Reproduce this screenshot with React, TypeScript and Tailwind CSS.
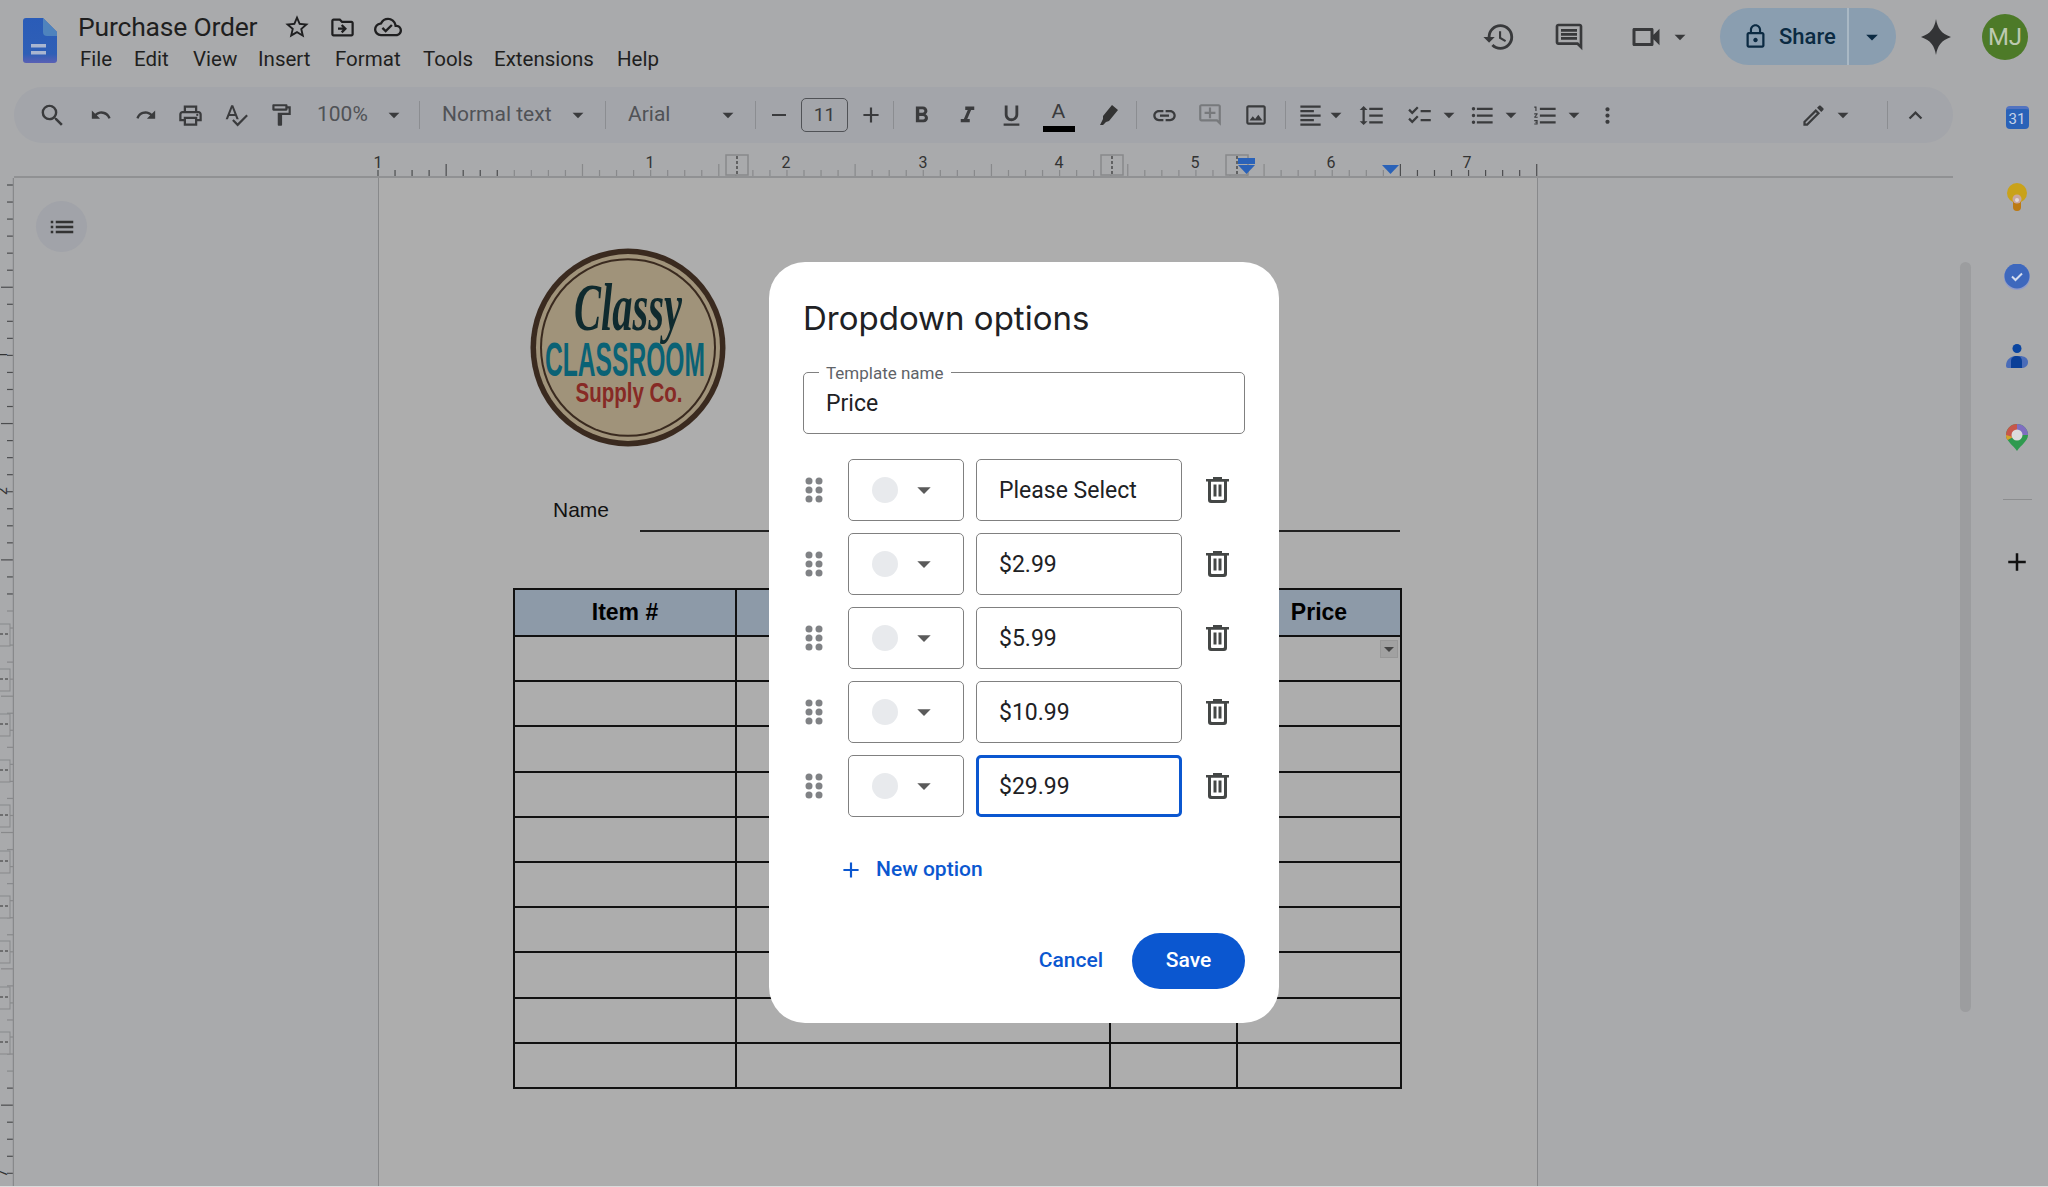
import type { ReactNode } from 'react'
import {
  MdSearch, MdUndo, MdRedo, MdOutlinePrint, MdSpellcheck, MdOutlineFormatPaint, MdFormatBold, MdFormatItalic,
  MdFormatUnderlined, MdOutlineLink, MdOutlineAddComment, MdOutlineImage, MdFormatAlignLeft, MdFormatLineSpacing,
  MdChecklist, MdFormatListBulleted, MdFormatListNumbered, MdMoreVert, MdOutlineEdit, MdKeyboardArrowUp, MdHistory,
  MdOutlineComment, MdOutlineVideocam, MdLockOutline, MdStarBorder, MdOutlineDriveFileMove, MdOutlineCloudDone,
  MdAdd, MdArrowDropDown, MdRemove, MdList,
} from 'react-icons/md'

const MENU = [
  ['File', 'w-[54px]'], ['Edit', 'w-[59px]'], ['View', 'w-[65px]'], ['Insert', 'w-[77px]'],
  ['Format', 'w-[88px]'], ['Tools', 'w-[71px]'], ['Extensions', 'w-[123px]'], ['Help', 'w-[50px]'],
] as const
const OPTIONS = ['Please Select', '$2.99', '$5.99', '$10.99', '$29.99']
const TABLE_ROWS = Array.from({ length: 10 }, (_, i) => i)
const RULER_TICKS = Array.from({ length: 69 }, (_, i) => 378 + i * 17.04)
const SIDE_TICKS = Array.from({ length: 60 }, (_, i) => i)

function Divider() {
  return <div className="w-px h-[28px] bg-[#8b8d91] shrink-0" />
}

function Btn({ children, className = 'w-[45px]' }: { children: ReactNode; className?: string }) {
  return <div className={`flex items-center justify-center shrink-0 h-full text-[#3a3b3d] ${className}`}>{children}</div>
}

function Caret({ className = '' }: { className?: string }) {
  return <MdArrowDropDown size={26} className={`shrink-0 ${className}`} />
}

function Drop({ label, className }: { label: string; className: string }) {
  return (
    <div className={`flex items-center justify-between shrink-0 h-full text-[21px] text-[#505256] ${className}`}>
      <span>{label}</span>
      <Caret className="text-[#3a3b3d]" />
    </div>
  )
}

function Toolbar() {
  return (
    <div className="ml-[14px] mr-0 h-[56px] rounded-[28px] bg-[#a3a5aa] flex items-center pl-[16px] pr-[15px] font-['Roboto',sans-serif]">
      <Btn><MdSearch size={29} /></Btn>
      <Btn className="w-[45px] ml-[3px]"><MdUndo size={22} /></Btn>
      <Btn><MdRedo size={22} /></Btn>
      <Btn><MdOutlinePrint size={27} /></Btn>
      <Btn><MdSpellcheck size={26} /></Btn>
      <Btn><MdOutlineFormatPaint size={26} /></Btn>
      <Drop label="100%" className="w-[116px] pl-[14px] pr-[12px]" />
      <Divider />
      <Drop label="Normal text" className="w-[185px] pl-[22px] pr-[14px]" />
      <Divider />
      <Drop label="Arial" className="w-[149px] pl-[22px] pr-[14px]" />
      <Divider />
      <Btn><MdRemove size={24} /></Btn>
      <div className="w-[47px] h-[34px] shrink-0 rounded-[5px] border border-[#505256] flex items-center justify-center text-[19px] text-[#3a3b3d]">11</div>
      <Btn><MdAdd size={26} /></Btn>
      <Divider />
      <Btn className="w-[45px] ml-[5px]"><MdFormatBold size={27} /></Btn>
      <Btn className="w-[44px] ml-px"><MdFormatItalic size={27} /></Btn>
      <Btn><MdFormatUnderlined size={27} /></Btn>
      <Btn className="w-[45px] ml-[2px]">
        <div className="relative w-[32px] h-[34px] flex justify-center font-['Liberation_Sans',sans-serif] text-[20px] leading-[26px]">
          A
          <div className="absolute left-0 right-0 bottom-0 h-[6px] bg-black" />
        </div>
      </Btn>
      <Btn className="w-[45px] ml-[5px]">
        <svg width="24" height="24" viewBox="0 0 24 24" fill="#333">
          <path d="M15 2l6 5-9 11-3 1-3 3H3l3-6 0-3z" />
        </svg>
      </Btn>
      <div className="ml-[5px]"><Divider /></div>
      <Btn className="w-[45px] ml-[5px]"><MdOutlineLink size={27} /></Btn>
      <Btn><MdOutlineAddComment size={26} className="text-[#77797c]" /></Btn>
      <Btn className="w-[45px] ml-px"><MdOutlineImage size={26} /></Btn>
      <div className="ml-[7px]"><Divider /></div>
      <Btn className="w-[30px] ml-[9px]"><MdFormatAlignLeft size={27} /></Btn>
      <Btn className="w-[22px]"><Caret /></Btn>
      <Btn className="w-[45px] ml-[2px]"><MdFormatLineSpacing size={27} /></Btn>
      <Btn className="w-[30px] ml-[10px]"><MdChecklist size={27} /></Btn>
      <Btn className="w-[30px]"><Caret /></Btn>
      <Btn className="w-[30px] ml-[3px]"><MdFormatListBulleted size={27} /></Btn>
      <Btn className="w-[28px]"><Caret /></Btn>
      <Btn className="w-[30px] ml-[5px]"><MdFormatListNumbered size={27} /></Btn>
      <Btn className="w-[28px]"><Caret /></Btn>
      <Btn className="w-[38px]"><MdMoreVert size={25} /></Btn>
      <Btn className="w-[30px] ml-auto"><MdOutlineEdit size={27} /></Btn>
      <Btn className="w-[30px]"><Caret /></Btn>
      <div className="ml-[29px]"><Divider /></div>
      <Btn className="w-[45px] ml-[5px]"><MdKeyboardArrowUp size={27} /></Btn>
    </div>
  )
}

function ColumnMark({ x }: { x: number }) {
  return (
    <g>
      <rect x={x} y="155" width="22" height="20" fill="#a9aaac" stroke="#88898b" strokeWidth="1.5" />
      <line x1={x + 11} x2={x + 11} y1="156" y2="176" stroke="#333" strokeDasharray="3 2" strokeWidth="1.2" />
    </g>
  )
}

function Ruler() {
  const labels: [string, number][] = [['1', 378], ['1', 650], ['2', 786], ['3', 923], ['4', 1059], ['5', 1195], ['6', 1331], ['7', 1467]]
  return (
    <svg className="block ml-[14px]" width="1939" height="35" viewBox="14 143 1939 35">
      {RULER_TICKS.map((x, i) => (
        <line key={i} x1={x} x2={x} y1={i % 8 === 4 ? 164 : 170} y2="176" stroke={x < 514 || x > 1400 ? '#4c4d4f' : '#88898b'} strokeWidth="1.2" />
      ))}
      {labels.map(([t, x], i) => (
        <text key={i} x={x} y="168" textAnchor="middle" fontFamily="Roboto, sans-serif" fontSize="16" fill="#333">{t}</text>
      ))}
      <line x1="14" x2="1953" y1="177" y2="177" stroke="#88898b" strokeWidth="1.6" />
      <ColumnMark x={726} />
      <ColumnMark x={1101} />
      <ColumnMark x={1226} />
      <rect x="1238" y="158" width="17" height="6" fill="#2a62b8" />
      <path d="M1238 165h17l-8.500 9z" fill="#2a62b8" />
      <path d="M1382 165h17l-8.500 9z" fill="#2a62b8" />
    </svg>
  )
}

function SideRuler() {
  const marks = [624, 669, 714, 760, 805, 851, 896, 941, 987, 1032]
  return (
    <svg className="block shrink-0" width="14" height="1009" viewBox="0 178 14 1009">
      {SIDE_TICKS.map((i) => {
        const y = 185 + i * 17.04
        return <line key={i} x1={(i + 2) % 8 === 0 ? 1 : 7} x2="13" y1={y} y2={y} stroke={y > 600 && y < 1080 ? '#88898b' : '#4c4d4f'} strokeWidth="1.2" />
      })}
      <line x1="13.500" x2="13.500" y1="178" y2="1187" stroke="#88898b" strokeWidth="1.5" />
      {[[355, '1'], [491, '2'], [1173, '7']].map(([y, t]) => (
        <text key={t} x="3" y={Number(y) + 4} fontFamily="Roboto, sans-serif" fontSize="14" fill="#333" textAnchor="middle" transform={`rotate(-90 3 ${y})`}>{t}</text>
      ))}
      {marks.map((y) => (
        <g key={y}>
          <rect x="-2" y={y} width="12" height="22" fill="#a9aaac" stroke="#88898b" />
          <line x1="0" x2="9" y1={y + 10} y2={y + 10} stroke="#333" strokeDasharray="3 2" />
        </g>
      ))}
    </svg>
  )
}

function Logo() {
  return (
    <svg width="196" height="199" viewBox="0 0 196 196" preserveAspectRatio="none" className="block">
      <circle cx="98" cy="98" r="97.500" fill="#3a2a1f" />
      <circle cx="98" cy="98" r="92" fill="#a0937a" />
      <circle cx="98" cy="98" r="88" fill="#3a2a1f" />
      <circle cx="98" cy="98" r="86" fill="#a0937a" />
      <text x="98" y="81" textAnchor="middle" fontFamily="'Liberation Serif', serif" fontStyle="italic" fontWeight="700" fontSize="66" fill="#0f2a2e" textLength="108" lengthAdjust="spacingAndGlyphs">Classy</text>
      <text x="95" y="126" textAnchor="middle" fontFamily="'Liberation Sans', sans-serif" fontWeight="700" fontSize="47" fill="#0a6275" textLength="160" lengthAdjust="spacingAndGlyphs">CLASSROOM</text>
      <text x="99" y="152" textAnchor="middle" fontFamily="'Liberation Sans', sans-serif" fontWeight="700" fontSize="27" fill="#872a25" textLength="107" lengthAdjust="spacingAndGlyphs">Supply Co.</text>
    </svg>
  )
}

function DocPage() {
  return (
    <div className="w-[1160px] shrink-0 bg-[#adadad] border-x border-[#88898b] font-['Liberation_Sans',sans-serif] text-black">
      <div className="ml-[151px] mt-[70px]"><Logo /></div>
      <div className="ml-[174px] mt-[48px] flex items-center h-[37px] pb-[7px]">
        <span className="w-[87px] text-[21px] text-[#111]">Name</span>
        <div className="w-[760px] self-end border-b-2 border-[#222] -mb-[7px]" />
      </div>
      <table className="ml-[134px] mt-[56px] w-[887px] table-fixed border-collapse border-2 border-[#111]">
        <colgroup>
          <col className="w-[222px]" />
          <col className="w-[374px]" />
          <col className="w-[127px]" />
          <col className="w-[164px]" />
        </colgroup>
        <thead>
          <tr className="h-[47px] bg-[#8d9aa8] text-[23px] font-bold">
            <th className="border-2 border-[#111]">Item #</th>
            <th className="border-2 border-[#111]" />
            <th className="border-2 border-[#111]" />
            <th className="border-2 border-[#111]">Price</th>
          </tr>
        </thead>
        <tbody>
          {TABLE_ROWS.map((i) => (
            <tr key={i} className="h-[45.200px]">
              <td className="border-2 border-[#111]" />
              <td className="border-2 border-[#111]" />
              <td className="border-2 border-[#111]" />
              <td className="relative border-2 border-[#111]">
                {i === 0 && (
                  <div className="absolute top-[3px] right-[2px] w-[18px] h-[18px] bg-[#a1a1a1] border border-[#979797] flex items-center justify-center overflow-hidden">
                    <MdArrowDropDown size={24} className="shrink-0 text-[#444]" />
                  </div>
                )}
              </td>
            </tr>
          ))}
        </tbody>
      </table>
    </div>
  )
}

function Trash() {
  return (
    <svg width="23" height="26" viewBox="0 0 23 26" className="ml-[24px] shrink-0" fill="#444746">
      <rect x="7" y="0" width="9" height="2.500" />
      <rect x="0" y="2" width="23" height="2.500" />
      <path d="M2 4h19v19a3 3 0 0 1-3 3H5a3 3 0 0 1-3-3zm3 .5V22a1 1 0 0 0 1 1h11a1 1 0 0 0 1-1V4.500z" fillRule="evenodd" />
      <rect x="7.500" y="7.500" width="3" height="12" />
      <rect x="12.500" y="7.500" width="3" height="12" />
    </svg>
  )
}

function OptionRow({ value, focused }: { value: string; focused: boolean }) {
  return (
    <div className="flex items-center h-[62px]">
      <svg width="22" height="26" viewBox="0 0 22 26" className="ml-0 shrink-0" fill="#808285">
        <circle cx="6" cy="4" r="3.500" /><circle cx="16" cy="4" r="3.500" />
        <circle cx="6" cy="13" r="3.500" /><circle cx="16" cy="13" r="3.500" />
        <circle cx="6" cy="22" r="3.500" /><circle cx="16" cy="22" r="3.500" />
      </svg>
      <div className="ml-[23px] w-[116px] h-full rounded-[5px] border-[1.500px] border-[#808080] flex items-center pl-[23px]">
        <div className="w-[26px] h-[26px] rounded-full bg-[#e8eaed]" />
        <MdArrowDropDown size={32} className="ml-[10px] text-[#5a5a5a]" />
      </div>
      <div className={`ml-[12px] w-[206px] h-full rounded-[5px] flex items-center pt-[2px] text-[23px] text-[#202124] ${focused ? 'border-[3.500px] border-[#0b57d0] pl-[20px]' : 'border-[1.500px] border-[#808080] pl-[22px]'}`}>
        {value}
      </div>
      <Trash />
    </div>
  )
}

function Modal() {
  return (
    <div className="absolute left-[769px] top-[262px] w-[510px] h-[761px] rounded-[36px] bg-white pt-[37px] px-[34px] font-['Open_Sans',sans-serif]">
      <div className="h-[40px] flex items-center text-[33px] text-[#202124] font-['Inter',sans-serif]">Dropdown options</div>
      <div className="relative mt-[33px] h-[62px] rounded-[5px] border-[1.500px] border-[#808080] flex items-center pl-[22px] pt-[3px] text-[23px] text-[#202124] font-['Roboto',sans-serif]">
        Price
        <span className="absolute left-[15px] -top-[10px] bg-white px-[7px] text-[17px] leading-[20px] text-[#5f6368]">Template name</span>
      </div>
      <div className="mt-[25px] flex flex-col gap-[12px] ml-0 font-['Roboto',sans-serif]">
        {OPTIONS.map((o, i) => (
          <OptionRow key={o} value={o} focused={i === 4} />
        ))}
      </div>
      <div className="mt-[38px] ml-[35px] flex items-center h-[30px] text-[21px] font-medium text-[#0b57d0] font-['Roboto',sans-serif]">
        <MdAdd size={26} />
        <span className="ml-[12px]">New option</span>
      </div>
      <div className="absolute right-[34px] top-[671px] flex items-center text-[21px] font-medium font-['Roboto',sans-serif]">
        <span className="text-[#0b57d0]">Cancel</span>
        <div className="ml-[29px] w-[113px] h-[56px] rounded-full bg-[#0b57d0] text-white flex items-center justify-center">Save</div>
      </div>
    </div>
  )
}

function Header() {
  return (
    <div className="h-[87px] flex font-['Roboto',sans-serif] text-[#1f1f20]">
      <svg width="34" height="45" viewBox="0 0 34 45" className="ml-[23px] mt-[18px] shrink-0">
        <defs>
          <linearGradient id="docBody" x1="0" y1="0" x2="0" y2="1">
            <stop offset="0" stopColor="#2a5cb8" />
            <stop offset="0.800" stopColor="#2f5fb6" />
            <stop offset="1" stopColor="#5a60b4" />
          </linearGradient>
        </defs>
        <path d="M3 0h17l14 14v28a3 3 0 0 1-3 3H3a3 3 0 0 1-3-3V3a3 3 0 0 1 3-3z" fill="url(#docBody)" />
        <path d="M20 0l14 14v4H24a4 4 0 0 1-4-4z" fill="#4f83bd" />
        <rect x="8" y="26" width="15" height="3.500" fill="#a9b6d0" />
        <rect x="8" y="33" width="15" height="3.500" fill="#a9b6d0" />
      </svg>
      <div className="ml-[21px] mt-[11px]">
        <div className="flex items-center h-[32px]">
          <span className="text-[26.500px] tracking-[-0.2px]">Purchase Order</span>
          <MdStarBorder size={28} className="ml-[26px]" />
          <MdOutlineDriveFileMove size={27} className="ml-[18px]" />
          <MdOutlineCloudDone size={28} className="ml-[18px]" />
        </div>
        <div className="flex mt-px h-[30px] items-center text-[20.500px] ml-[2px]">
          {MENU.map(([m, w]) => (
            <span key={m} className={`shrink-0 ${w}`}>{m}</span>
          ))}
        </div>
      </div>
      <div className="ml-auto flex items-start mr-[20px] mt-[8px] h-[57px]">
        <div className="flex items-center h-full mr-[14px] text-[#38393b]">
          <MdHistory size={34} />
          <MdOutlineComment size={32} className="ml-[37px]" />
          <MdOutlineVideocam size={36} className="ml-[43px]" />
          <MdArrowDropDown size={26} className="ml-[3px]" />
        </div>
        <div className="ml-[13px] w-[176px] h-full rounded-full bg-[#8a9eb0] flex items-center text-[#0b2a42]">
          <div className="w-[129px] h-full flex items-center pl-[22px] border-r-2 border-[#a9b8c4]">
            <MdLockOutline size={27} />
            <span className="ml-[10px] text-[22px] font-medium">Share</span>
          </div>
          <MdArrowDropDown size={28} className="ml-[9px]" />
        </div>
        <svg width="30" height="36" viewBox="0 0 30 36" className="ml-[25px] mt-[11px]" fill="#333436">
          <path d="M15 0c1.500 9 5 14.500 15 18-10 3.500-13.500 9-15 18-1.500-9-5-14.500-15-18 10-3.500 13.500-9 15-18z" />
        </svg>
        <div className="ml-[31px] mt-[6px] w-[46px] h-[46px] rounded-full bg-[#4d7a28] flex items-center justify-center text-[#bcc9b0] text-[24px]">MJ</div>
      </div>
    </div>
  )
}

function SideApps() {
  return (
    <div className="flex w-[95px] shrink-0">
      <div className="ml-[7px] mt-[175px] w-[11px] h-[750px] rounded-full bg-[#9c9d9f] shrink-0" />
      <div className="ml-[15px] w-[62px] flex flex-col items-center pt-[19px]">
        <div className="w-[23px] h-[23px] rounded-[4px] bg-[#2a62b8] border-t-[3px] border-[#5273c0] flex items-center justify-center text-[15px] text-[#c7d3e8] font-['Roboto',sans-serif]">31</div>
        <svg width="24" height="28" viewBox="0 0 24 28" className="mt-[54px]">
          <circle cx="10" cy="10" r="10" transform="translate(2 0)" fill="#c9a21a" />
          <rect x="8" y="16" width="8" height="12" rx="4" fill="#bd7a12" />
          <circle cx="12" cy="16" r="4.500" fill="#c9a7a0" />
          <circle cx="12" cy="17" r="2" fill="#e0d8d8" />
        </svg>
        <svg width="26" height="26" viewBox="0 0 26 26" className="mt-[53px]">
          <circle cx="13" cy="13" r="13" fill="#8f9bcb" />
          <circle cx="13" cy="12" r="12.500" fill="#3e68bd" />
          <path d="M8 12.500l3.500 3.500 6.500-6.500" stroke="#d5dcef" strokeWidth="2" fill="none" />
        </svg>
        <svg width="22" height="24" viewBox="0 0 22 24" className="mt-[54px]">
          <circle cx="11" cy="4.500" r="4.500" fill="#0a45a0" />
          <path d="M2 24a2 2 0 0 1-2-2c0-7 5-10 11-10h3c4 0 8 2 8 6s-3 6-7 6z" fill="#4a6cb8" />
          <path d="M5 24v-7c0-3 2-5 6-5 4 0 5 3 5 6v6z" fill="#0a3f98" />
        </svg>
        <svg width="22" height="27" viewBox="0 0 22 27" className="mt-[56px]">
          <path d="M11 0a11 11 0 0 1 11 11c0 6-7 10-11 16C7 21 0 17 0 11A11 11 0 0 1 11 0z" fill="#2f9a4f" />
          <path d="M11 0a11 11 0 0 0-11 11c0 2 .6 3.500 1.500 5L11 11z" fill="#c7564a" />
          <path d="M11 0a11 11 0 0 1 11 11l-11 0z" fill="#7f6ec0" />
          <path d="M0 11c0 2 .6 3.500 1.500 5L7 13z" fill="#d2a52a" />
          <circle cx="11" cy="11" r="5.500" fill="#dcdcdc" />
        </svg>
        <div className="mt-[48px] w-[29px] h-px bg-[#8c8d8f]" />
        <MdAdd size={30} className="mt-[47px] text-[#111]" />
      </div>
    </div>
  )
}

export default function App() {
  return (
    <div className="relative w-[2048px] h-[1187px] overflow-hidden bg-[#a9aaac] border-b border-[#dcdcdc]">
      <Header />
      <div className="flex">
        <div className="w-[1953px] shrink-0">
          <Toolbar />
          <Ruler />
          <div className="flex h-[1009px]">
            <SideRuler />
            <div className="w-[364px] shrink-0">
              <div className="ml-[22px] mt-[23px] w-[51px] h-[51px] rounded-full bg-[#a1a3a9] flex items-center justify-center">
                <MdList size={30} className="text-[#333]" />
              </div>
            </div>
            <DocPage />
          </div>
        </div>
        <SideApps />
      </div>
      <Modal />
    </div>
  )
}
